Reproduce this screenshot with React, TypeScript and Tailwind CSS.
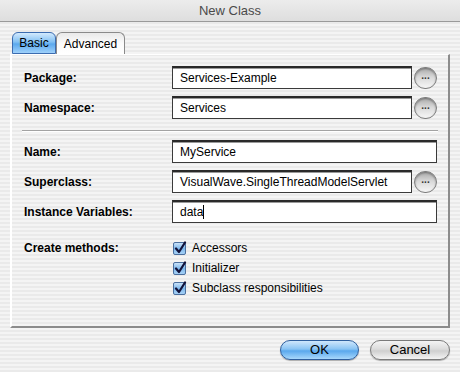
const stripes =
  "bg-[repeating-linear-gradient(to_bottom,#f4f4f4_0px,#f4f4f4_2px,#eaeaea_2px,#eaeaea_4px)]";

function Field({ value, width, cursor }: { value: string; width: string; cursor?: boolean }) {
  return (
    <div
      className={`${width} h-[23px] flex items-center bg-white border border-[#3a3a3a] border-t-2 border-t-[#2a2a2a] shadow-[inset_0_1px_0_#9a9a9a] pl-[7px] text-[12px] text-black`}
    >
      <span>{value}</span>
      {cursor && <span className="w-px h-[14px] bg-black" />}
    </div>
  );
}

function Dots() {
  return (
    <div className="ml-[2px] w-[23px] h-[22px] rounded-full border border-[#7d7d7d] bg-[linear-gradient(to_bottom,#a9a9a9,#d8d8d8_45%,#f7f7f7)] shadow-[inset_0_1px_2px_rgba(0,0,0,0.35)] flex items-center justify-center text-[10px] leading-none font-bold text-[#333] pb-[3px]">
      ...
    </div>
  );
}

function Row({ label, children }: { label: string; children: React.ReactNode }) {
  return (
    <div className="flex items-center">
      <div className="w-[148px] text-[12px] font-bold text-black">{label}</div>
      {children}
    </div>
  );
}

function Check({ label }: { label: string }) {
  return (
    <div className="flex items-center h-[20px]">
      <svg width="15" height="14" viewBox="0 0 15 14" className="ml-[1px]">
        <defs>
          <linearGradient id="cb" x1="0" y1="0" x2="0" y2="1">
            <stop offset="0" stopColor="#cfe6fb" />
            <stop offset="0.5" stopColor="#7fb8ec" />
            <stop offset="1" stopColor="#a9d3f7" />
          </linearGradient>
        </defs>
        <rect x="0.5" y="1.5" width="12" height="12" rx="1.5" fill="url(#cb)" stroke="#4b6f9e" />
        <path d="M3 7.5 L6 11 L12 1.5" fill="none" stroke="#12123a" strokeWidth="2.2" strokeLinecap="round" strokeLinejoin="round" />
      </svg>
      <span className="ml-[4px] text-[12px] text-black">{label}</span>
    </div>
  );
}

export default function App() {
  return (
    <div
      className={`w-[460px] h-[372px] ${stripes} overflow-hidden`}
      style={{ fontFamily: '"Liberation Sans", Arial, sans-serif' }}
    >
      <div className="h-[22px] bg-[linear-gradient(to_bottom,#ececec,#dedede)] border-b border-[#9a9a9a] flex items-center justify-center text-[13px] text-[#4a4a4a]">
        New Class
      </div>

      <div className="flex pl-[12px] mt-[10px] h-[22px]">
        <div className="w-[44px] h-[22px] rounded-t-[6px] border border-[#3c6cb0] bg-[linear-gradient(to_bottom,#d3eafd,#82c0f3_45%,#5ca9ee_55%,#9fd1fa)] flex items-center justify-center text-[12px] text-black">
          Basic
        </div>
        <div className="w-[69px] h-[22px] rounded-t-[6px] border border-[#8a8a8a] border-b-0 bg-[linear-gradient(to_bottom,#e9e9e9,#fbfbfb_50%,#ffffff)] flex items-center justify-center text-[12px] text-black">
          Advanced
        </div>
      </div>

      <div className="ml-[10px] w-[440px] h-[274px] border-t border-t-white border-l-2 border-l-white border-r-2 border-r-[#8c8c8c] border-b-2 border-b-[#8c8c8c] pl-[12px] pt-[11px]">
        <div className="flex flex-col gap-[7px]">
          <Row label="Package:">
            <Field value="Services-Example" width="w-[240px]" />
            <Dots />
          </Row>
          <Row label="Namespace:">
            <Field value="Services" width="w-[240px]" />
            <Dots />
          </Row>
        </div>

        <div className="ml-[-2px] mt-[11px] mb-[9px] w-[416px] h-px bg-[#a3a3a3] shadow-[0_1px_0_#ffffff]" />

        <div className="flex flex-col gap-[7px]">
          <Row label="Name:">
            <Field value="MyService" width="w-[265px]" />
          </Row>
          <Row label="Superclass:">
            <Field value="VisualWave.SingleThreadModelServlet" width="w-[240px]" />
            <Dots />
          </Row>
          <Row label="Instance Variables:">
            <Field value="data" width="w-[265px]" cursor />
          </Row>
        </div>

        <div className="flex mt-[15px]">
          <div className="w-[148px] text-[12px] font-bold text-black leading-[20px]">Create methods:</div>
          <div className="flex flex-col">
            <Check label="Accessors" />
            <Check label="Initializer" />
            <Check label="Subclass responsibilities" />
          </div>
        </div>
      </div>

      <div className="flex justify-end gap-[11px] pr-[10px] mt-[12px]">
        <div className="w-[79px] h-[20px] rounded-full border border-[#2f5f9e] bg-[linear-gradient(to_bottom,#cfe7fc,#8ac4f4_45%,#5aa8ed_55%,#a8d8fc)] flex items-center justify-center text-[13px] text-black shadow-[0_1px_1px_rgba(0,0,0,0.3)]">
          OK
        </div>
        <div className="w-[80px] h-[20px] rounded-full border border-[#7a7a7a] bg-[linear-gradient(to_bottom,#f4f4f4,#dcdcdc_45%,#cfcfcf_55%,#f4f4f4)] flex items-center justify-center text-[13px] text-black shadow-[0_1px_1px_rgba(0,0,0,0.3)]">
          Cancel
        </div>
      </div>
    </div>
  );
}
